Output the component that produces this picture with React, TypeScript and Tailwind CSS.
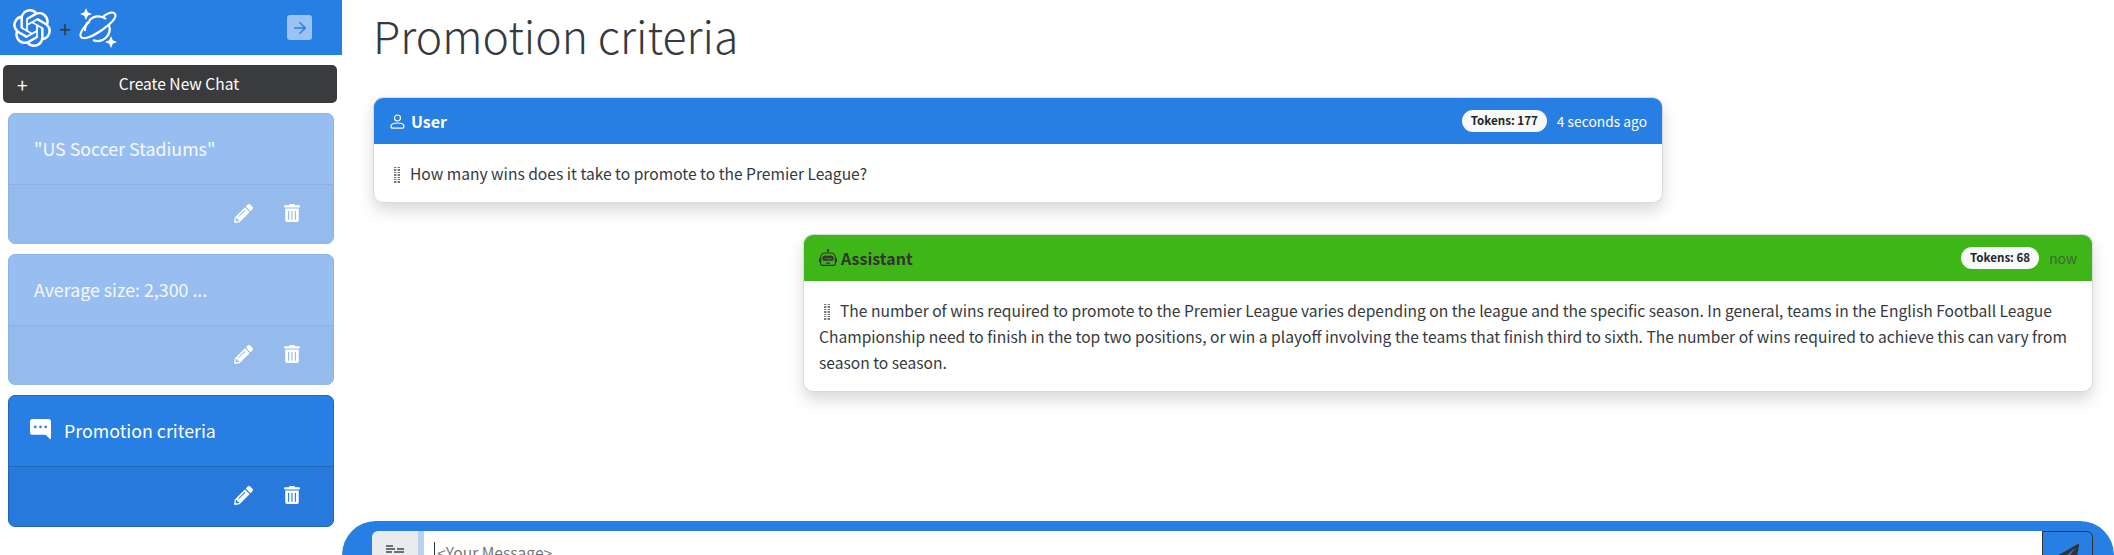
import type { ReactNode } from "react";
import { SiOpenai } from "react-icons/si";
import { FaPencilAlt, FaTrashAlt, FaPaperPlane } from "react-icons/fa";
import { BsChatRightDotsFill, BsRobot } from "react-icons/bs";
import { LuArrowRight } from "react-icons/lu";

const font = "font-['Noto_Sans_CJK_JP','Noto_Sans',sans-serif]";

function Planet() {
  return (
    <svg width="38" height="40" viewBox="0 0 38 40" fill="none" stroke="white" strokeWidth="2.2">
      <path d="M10 13 A12 12 0 0 1 27 11" />
      <path d="M30 17 A12 12 0 0 1 14 32" />
      <path d="M9 14 A12 12 0 0 0 6 23" />
      <path d="M10 14 C3 21 0 26 2 29 C4 32 13 29 23 22 C33 15 38 9 36 6 C34 3 29 5 25 8" strokeLinecap="round" />
      <path d="M5 0 L6.8 4.2 L11 6 L6.8 7.8 L5 12 L3.2 7.8 L-1 6 L3.2 4.2 Z" transform="translate(2 0)" fill="white" stroke="none" />
      <path d="M32 28 L33.8 32.2 L38 34 L33.8 35.8 L32 40 L30.2 35.8 L26 34 L30.2 32.2 Z" fill="white" stroke="none" />
    </svg>
  );
}

function PersonIcon() {
  return (
    <svg width="15" height="15" viewBox="0 0 15 15" fill="none" stroke="currentColor" strokeWidth="1.2">
      <circle cx="7.5" cy="4" r="3" />
      <path d="M1 12.5 C1 10.2 4 9 7.5 9 C11 9 14 10.2 14 12.5 C14 13.6 13.4 14.2 12.5 14.2 H2.5 C1.6 14.2 1 13.6 1 12.5 Z" />
    </svg>
  );
}

function Dots() {
  return (
    <span className="inline-block w-[6px] h-[16px] align-[-3px] overflow-hidden">
      <span className="grid grid-cols-3 gap-y-[1px]">
        {Array.from({ length: 24 }).map((_, i) => (
          <span key={i} className={`w-[2px] h-[1.4px] ${i % 3 === 1 ? "bg-[#c8c8c8]" : "bg-[#777]"}`} />
        ))}
      </span>
    </span>
  );
}

function ChatItem({ title, active }: { title: string; active?: boolean }) {
  return (
    <div
      className={`mx-2 rounded-[7px] border text-white ${
        active ? "bg-[#277ee3] border-[#2266b8] h-[132px]" : "bg-[#98bef1] border-[#8fb4e4] h-[131px]"
      }`}
    >
      <div className={`h-[71px] flex items-center text-[17.8px] border-b ${active ? "border-[#2266b8] px-[21px]" : "border-[#8fb0dc] px-[25px] text-white/90"}`}>
        {active && <BsChatRightDotsFill className="w-[21px] h-[21px] mr-[13px] -mt-[3px]" />}
        <span className="-mt-[1px]">{title}</span>
      </div>
      <div className={`h-[59px] flex items-center justify-end gap-[31px] pr-[33px] rounded-b-[7px] ${active ? "bg-[#2779dc]" : "bg-[#95bbed]"}`}>
        <FaPencilAlt className="w-[19px] h-[19px] -mt-[3px]" />
        <FaTrashAlt className="w-[16px] h-[18px] -mt-[3px]" />
      </div>
    </div>
  );
}

function Message({ who, tokens, time, green, children }: { who: string; tokens: number; time: string; green?: boolean; children: ReactNode }) {
  return (
    <div className="w-[1290px] rounded-[10px] border border-[#d9d9d9] bg-white shadow-[0_8px_16px_rgba(0,0,0,0.15)] overflow-hidden">
      <div className={`h-[46px] flex items-center justify-between pl-[15px] pr-[15px] ${green ? "bg-[#3fb618] text-[#333]" : "bg-[#277ee3] text-white"}`}>
        <div className={`flex items-center text-[16px] font-bold ${green ? "gap-[4px]" : "gap-[6px] pl-[1px]"}`}>
          {green ? <BsRobot className="w-[18px] h-[18px]" /> : <PersonIcon />}
          <span>{who}</span>
        </div>
        <div className="flex items-center gap-[10px] text-[13.8px]">
          <span className="bg-[#f8f9fa] text-[#212529] font-bold text-[11.6px] rounded-full px-[9px] h-[22px] flex items-center">Tokens: {tokens}</span>
          <span className={green ? "text-[#3a6a2c]" : ""}>{time}</span>
        </div>
      </div>
      <div className="px-[15px] py-[16px] text-[15.6px] leading-[26px] text-[#343a40]">{children}</div>
    </div>
  );
}

export default function App() {
  return (
    <div className={`flex w-[2114px] h-[555px] overflow-hidden bg-white ${font}`}>
      <aside className="w-[342px] shrink-0 flex flex-col">
        <div className="h-[55px] bg-[#277ee3] flex items-center justify-between pl-[13px] pr-[30px]">
          <div className="flex items-center">
            <SiOpenai className="w-[38px] h-[38px] text-white" />
            <span className="text-[#343a40] text-[22px] leading-none w-[28px] text-center">+</span>
            <Planet />
          </div>
          <div className="w-[25px] h-[25px] bg-[#9cc2f2] rounded-[3px] flex items-center justify-center">
            <LuArrowRight className="w-[18px] h-[18px] text-[#277ee3]" />
          </div>
        </div>
        <button className={`mx-[3px] mt-[10px] mb-[10px] w-[334px] h-[38px] bg-[#3a3b3d] text-white rounded-[5px] text-[15.6px] flex items-center relative ${font}`}>
          <span className="absolute left-[14px] text-[19px] leading-none">+</span>
          <span className="flex-1 text-center pl-[18px]">Create New Chat</span>
        </button>
        <div className="flex flex-col gap-[10px]">
          <ChatItem title={'"US Soccer Stadiums"'} />
          <ChatItem title="Average size: 2,300 ..." />
          <ChatItem title="Promotion criteria" active />
        </div>
      </aside>
      <main className="flex-1 flex flex-col min-w-0">
        <h1 className="text-[44.5px] leading-[58px] font-light text-[#343a40] pl-[31px] pt-[6px] h-[97px] shrink-0">Promotion criteria</h1>
        <div className="flex-1 flex flex-col gap-[31px] pl-[31px] pr-[21px]">
          <div className="self-start">
            <Message who="User" tokens={177} time="4 seconds ago">
              <span className="ml-[5px] mr-[10px]"><Dots /></span>How many wins does it take to promote to the Premier League?
            </Message>
          </div>
          <div className="self-end">
            <Message who="Assistant" tokens={68} time="now" green>
              <span className="ml-[5px] mr-[10px]"><Dots /></span>The number of wins required to promote to the Premier League varies depending on the league and the specific season. In general, teams in the English Football League Championship need to finish in the top two positions, or win a playoff involving the teams that finish third to sixth. The number of wins required to achieve this can vary from season to season.
            </Message>
          </div>
        </div>
        <div className="h-[34px] shrink-0 bg-[#277ee3] rounded-t-[40px] pt-[10px] pl-[30px] pr-[21px] overflow-hidden">
          <div className="flex h-[40px]">
            <div className="w-[46px] bg-[#e9ecef] rounded-tl-[6px] flex justify-center pt-[14px]">
              <svg width="20" height="10" viewBox="0 0 20 10" stroke="#444" strokeWidth="1.3"><path d="M1 1h7M1 4h9M12 4h7M1 7h6M9 7h10" /></svg>
            </div>
            <div className="w-[6px] bg-[#b9d2f0]" />
            <div className="flex-1 bg-white pl-[10px] pt-[11px]">
              <span className="block border-l border-[#333] pl-[2px] text-[15.6px] leading-[20px] text-[#777]">&lt;Your Message&gt;</span>
            </div>
            <div className="w-[51px] border border-[#333] rounded-tr-[6px] flex justify-center pt-[12px]">
              <FaPaperPlane className="w-[22px] h-[22px] text-[#333]" />
            </div>
          </div>
        </div>
      </main>
    </div>
  );
}
